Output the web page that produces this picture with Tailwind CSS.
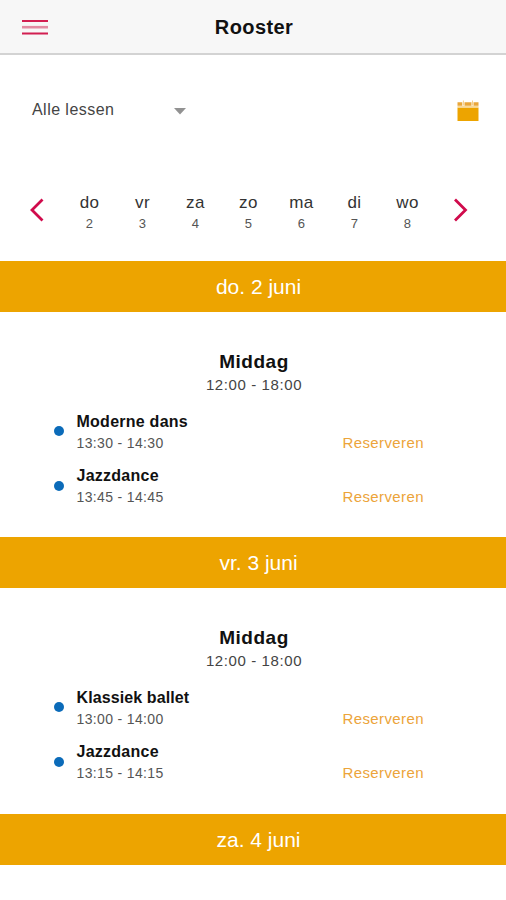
<!DOCTYPE html>
<html lang="nl">
<head>
  <meta charset="UTF-8" />
  <meta name="viewport" content="width=device-width, initial-scale=1.0"/>
  <title>Rooster</title>
  <script src="https://cdn.jsdelivr.net/npm/@tailwindcss/browser@4"></script>
</head>
<body class="bg-white text-black font-['Liberation_Sans',Arial,sans-serif] h-[900px] overflow-hidden">

  <!-- Header -->
  <header class="h-[55px] bg-[#f7f7f7] border-b-2 border-[#d3d3d3] grid grid-cols-[1fr_auto_1fr] items-center pl-[22px] pr-5">
    <button aria-label="Menu">
      <svg class="block" width="26" height="16" viewBox="0 0 26 16">
        <path d="M0 2h26M0 14.500h26" stroke="#d21f51" stroke-width="2"/>
        <path d="M0 8.200h26" stroke="#e38ba2" stroke-width="2.600"/>
      </svg>
    </button>
    <h1 class="text-[20px] leading-6 font-bold tracking-[0.4px] text-[#111]">Rooster</h1>
  </header>

  <!-- Filter -->
  <div class="h-[110px] flex items-center justify-between pl-8 pr-[27px] text-[#444]">
    <button class="w-[154px] flex items-center justify-between">
      <span class="text-base tracking-[0.45px] whitespace-nowrap">Alle lessen</span>
      <svg class="block mt-0.5" width="12" height="7" viewBox="0 0 12 7"><path d="M0 0h12L6 6.5z" fill="#929292"/></svg>
    </button>
    <button aria-label="Kalender">
      <svg class="block mt-0.5" width="22" height="22" viewBox="0 0 22 22">
        <path d="M.5 7.5h21V21H.5z" fill="#eda400"/>
        <path d="M.5 5.8h21v1.7H.5z" fill="#f8d999"/>
        <path d="M.5 2.3h4.8v3.500H.5zM7.5 2.3h7v3.500h-7zM16.500 2.3h5v3.500h-5z" fill="#e9a63a"/>
        <path d="M6.4 .5v5M15.500 .5v5" stroke="#f5cf86" stroke-width="1"/>
      </svg>
    </button>
  </div>

  <!-- Week -->
  <nav class="h-24 flex items-start pt-7 pl-[30px] pr-[38px]">
    <button class="w-[33px] pt-[5px]" aria-label="Vorige week">
      <svg class="block" width="14" height="24" viewBox="0 0 14 24"><path d="M12.5 1.5L2 12l10.5 10.5" fill="none" stroke="#d00b4c" stroke-width="2.8"/></svg>
    </button>
    <div class="w-[371px] grid grid-cols-7 text-center text-[17px] leading-5 tracking-[0.4px] text-[#333]">
      <div>do<p class="text-[13px] leading-[22px] text-[#555]">2</p></div>
      <div>vr<p class="text-[13px] leading-[22px] text-[#555]">3</p></div>
      <div>za<p class="text-[13px] leading-[22px] text-[#555]">4</p></div>
      <div>zo<p class="text-[13px] leading-[22px] text-[#555]">5</p></div>
      <div>ma<p class="text-[13px] leading-[22px] text-[#555]">6</p></div>
      <div>di<p class="text-[13px] leading-[22px] text-[#555]">7</p></div>
      <div>wo<p class="text-[13px] leading-[22px] text-[#555]">8</p></div>
    </div>
    <button class="pl-5 pt-[5px]" aria-label="Volgende week">
      <svg class="block" width="14" height="24" viewBox="0 0 14 24"><path d="M1 1.5L11.5 12 1 22.5" fill="none" stroke="#d00b4c" stroke-width="2.8"/></svg>
    </button>
  </nav>

  <!-- Donderdag -->
  <section class="h-[276.4px]">
    <h2 class="h-[51px] flex items-center justify-center pl-[11px] bg-[#eda400] text-white text-[21px]">do. 2 juni</h2>
    <div class="pt-[38px] pl-0.5 text-center">
      <h3 class="text-[19px] leading-6 font-bold tracking-[0.5px] text-[#111]">Middag</h3>
      <p class="text-[15px] leading-[22px] tracking-[0.6px] text-[#444]">12:00 - 18:00</p>
    </div>
    <ul class="pt-[15px] pl-[54px] pr-[82px]">
      <li class="h-[54px] flex items-start">
        <span class="size-[10px] mt-[15px] rounded-full bg-[#0b6bb9]"></span>
        <div class="pl-[12.5px] flex-1">
          <h4 class="text-base leading-[22px] font-bold tracking-[0.25px] text-[#111]">Moderne dans</h4>
          <p class="text-[14px] leading-5 tracking-[0.35px] text-[#555]">13:30 - 14:30</p>
        </div>
        <a href="#" class="pt-[21px] text-[15px] leading-[22px] tracking-[0.4px] text-[#eca43a]">Reserveren</a>
      </li>
      <li class="h-[54px] flex items-start">
        <span class="size-[10px] mt-4 rounded-full bg-[#0b6bb9]"></span>
        <div class="pl-[12.5px] flex-1">
          <h4 class="text-base leading-[22px] font-bold tracking-[0.25px] text-[#111]">Jazzdance</h4>
          <p class="text-[14px] leading-5 tracking-[0.35px] text-[#555]">13:45 - 14:45</p>
        </div>
        <a href="#" class="pt-[21px] text-[15px] leading-[22px] tracking-[0.4px] text-[#eca43a]">Reserveren</a>
      </li>
    </ul>
  </section>

  <!-- Vrijdag -->
  <section class="h-[276.4px]">
    <h2 class="h-[51px] flex items-center justify-center pl-[11px] bg-[#eda400] text-white text-[21px]">vr. 3 juni</h2>
    <div class="pt-[38px] pl-0.5 text-center">
      <h3 class="text-[19px] leading-6 font-bold tracking-[0.5px] text-[#111]">Middag</h3>
      <p class="text-[15px] leading-[22px] tracking-[0.6px] text-[#444]">12:00 - 18:00</p>
    </div>
    <ul class="pt-[15px] pl-[54px] pr-[82px]">
      <li class="h-[54px] flex items-start">
        <span class="size-[10px] mt-[15px] rounded-full bg-[#0b6bb9]"></span>
        <div class="pl-[12.5px] flex-1">
          <h4 class="text-base leading-[22px] font-bold tracking-[0.1px] text-[#111]">Klassiek ballet</h4>
          <p class="text-[14px] leading-5 tracking-[0.35px] text-[#555]">13:00 - 14:00</p>
        </div>
        <a href="#" class="pt-[21px] text-[15px] leading-[22px] tracking-[0.4px] text-[#eca43a]">Reserveren</a>
      </li>
      <li class="h-[54px] flex items-start">
        <span class="size-[10px] mt-4 rounded-full bg-[#0b6bb9]"></span>
        <div class="pl-[12.5px] flex-1">
          <h4 class="text-base leading-[22px] font-bold tracking-[0.25px] text-[#111]">Jazzdance</h4>
          <p class="text-[14px] leading-5 tracking-[0.35px] text-[#555]">13:15 - 14:15</p>
        </div>
        <a href="#" class="pt-[21px] text-[15px] leading-[22px] tracking-[0.4px] text-[#eca43a]">Reserveren</a>
      </li>
    </ul>
  </section>

  <!-- Zaterdag -->
  <section>
    <h2 class="h-[51px] flex items-center justify-center pl-[11px] bg-[#eda400] text-white text-[21px]">za. 4 juni</h2>
  </section>

</body>
</html>
